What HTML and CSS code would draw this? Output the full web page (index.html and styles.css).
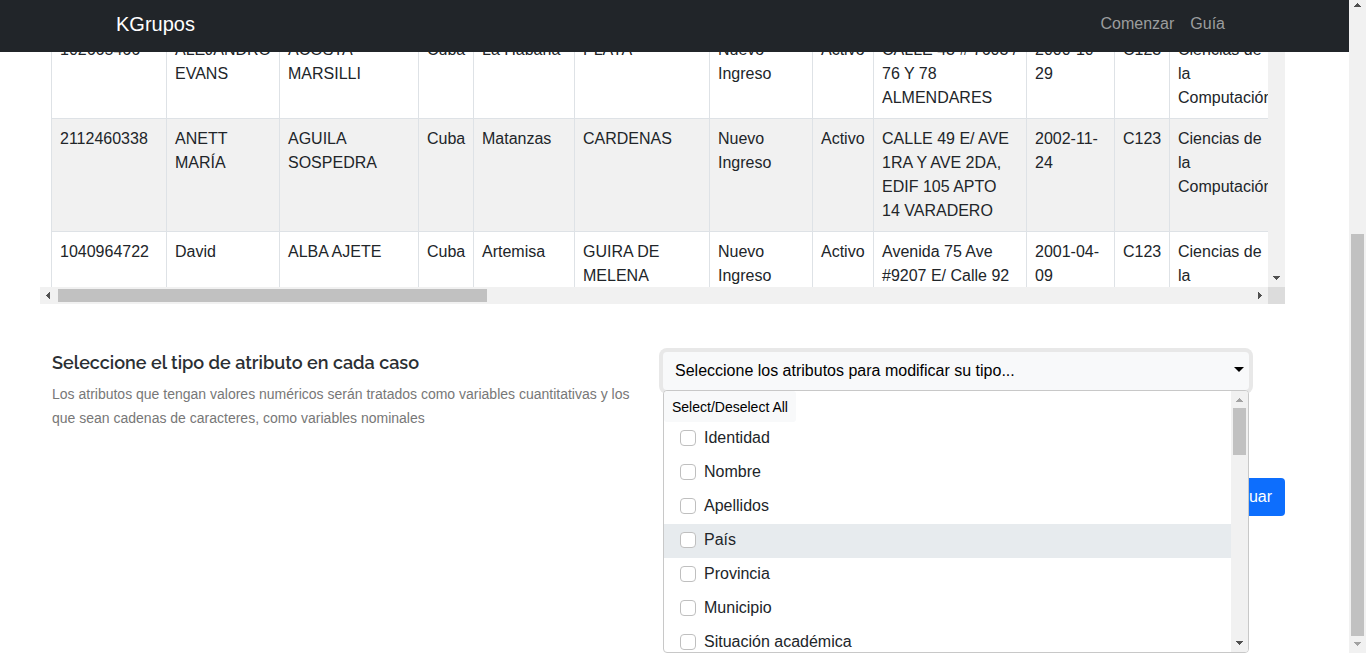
FILE: index.html
```html
<!DOCTYPE html>
<html lang="es">
<head>
<meta charset="utf-8">
<title>KGrupos</title>
<link rel="stylesheet" href="styles.css">
</head>
<body>
<div class="app">
  <div class="page">
    <header class="navbar">
      <a class="brand" href="#">KGrupos</a>
      <nav class="nav">
        <a class="nav-link" href="#">Comenzar</a>
        <a class="nav-link" href="#">Guía</a>
      </nav>
    </header>
    <main class="content">
      <div class="scroller">
        <div class="viewport">
          <table class="data">
            <colgroup>
              <col class="c-id"><col class="c-name"><col class="c-last"><col class="c-short"><col class="c-prov"><col class="c-mun"><col class="c-sit"><col class="c-state"><col class="c-addr"><col class="c-date"><col class="c-short"><col class="c-career">
            </colgroup>
            <tbody>
              <tr><td>102665466</td><td>ALEJANDRO EVANS</td><td>ACOSTA MARSILLI</td><td>Cuba</td><td>La Habana</td><td>PLAYA</td><td>Nuevo Ingreso</td><td>Activo</td><td>CALLE 43 # 7603 / 76 Y 78 ALMENDARES</td><td>2000-10-29</td><td>C123</td><td>Ciencias de la Computación</td></tr>
              <tr><td>2112460338</td><td>ANETT MARÍA</td><td>AGUILA SOSPEDRA</td><td>Cuba</td><td>Matanzas</td><td>CARDENAS</td><td>Nuevo Ingreso</td><td>Activo</td><td>CALLE 49 E/ AVE 1RA Y AVE 2DA, EDIF 105 APTO 14 VARADERO</td><td>2002-11-24</td><td>C123</td><td>Ciencias de la Computación</td></tr>
              <tr><td>1040964722</td><td>David</td><td>ALBA AJETE</td><td>Cuba</td><td>Artemisa</td><td>GUIRA DE MELENA</td><td>Nuevo Ingreso</td><td>Activo</td><td>Avenida 75 Ave #9207 E/ Calle 92</td><td>2001-04-09</td><td>C123</td><td>Ciencias de la Computación</td></tr>
            </tbody>
          </table>
        </div>
        <div class="bar bar-y bottom">
          <svg class="arrow" viewBox="0 0 17 17"><path d="M5 6h7v1h-1v1h-1v1h-1v1h-1v-1h-1v-1h-1v-1h-1z"/></svg>
        </div>
        <div class="bar bar-x">
          <svg class="arrow" viewBox="0 0 17 17"><path d="M10 5v7h-1v-1h-1v-1h-1v-1h-1v-1h1v-1h1v-1h1v-1z"/></svg>
          <div class="track-x"><div class="thumb thumb-table"></div></div>
          <svg class="arrow" viewBox="0 0 17 17"><path d="M7 5v7h1v-1h1v-1h1v-1h1v-1h-1v-1h-1v-1h-1v-1z"/></svg>
        </div>
        <div class="corner"></div>
      </div>

      <section class="types">
        <div class="intro">
          <h2 class="title">Seleccione el tipo de atributo en cada caso</h2>
          <p class="help">Los atributos que tengan valores numéricos serán tratados como variables cuantitativas y los que sean cadenas de caracteres, como variables nominales</p>
        </div>
        <div class="picker">
          <button class="toggle" type="button" aria-expanded="true"><span>Seleccione los atributos para modificar su tipo...</span><span class="caret"></span></button>
          <div class="menu">
            <div class="options">
              <button class="all" type="button">Select/Deselect All</button>
              <label class="option"><input class="check" type="checkbox">Identidad</label>
              <label class="option"><input class="check" type="checkbox">Nombre</label>
              <label class="option"><input class="check" type="checkbox">Apellidos</label>
              <label class="option active"><input class="check" type="checkbox">País</label>
              <label class="option"><input class="check" type="checkbox">Provincia</label>
              <label class="option"><input class="check" type="checkbox">Municipio</label>
              <label class="option"><input class="check" type="checkbox">Situación académica</label>
            </div>
            <div class="bar bar-y">
              <svg class="arrow off" viewBox="0 0 17 17"><path d="M5 11h7v-1h-1v-1h-1v-1h-1v-1h-1v1h-1v1h-1v1h-1z"/></svg>
              <div class="track-y"><div class="thumb thumb-menu"></div></div>
              <svg class="arrow" viewBox="0 0 17 17"><path d="M5 6h7v1h-1v1h-1v1h-1v1h-1v-1h-1v-1h-1v-1h-1z"/></svg>
            </div>
          </div>
        </div>
      </section>
      <div class="actions"><button class="primary" type="button">Continuar</button></div>
    </main>
  </div>
  <div class="bar bar-y">
    <svg class="arrow" viewBox="0 0 17 17"><path d="M5 7h7v-1h-1v-1h-1v-1h-1v-1h-1v1h-1v1h-1v1h-1z"/></svg>
    <div class="track-y end"><div class="thumb thumb-page"></div></div>
    <svg class="arrow off" viewBox="0 0 17 17"><path d="M5 6h7v1h-1v1h-1v1h-1v1h-1v-1h-1v-1h-1v-1h-1z"/></svg>
  </div>
</div>
</body>
</html>
```

FILE: styles.css
```css
* { box-sizing: border-box; }
body {
  margin: 0;
  font: 16px/24px "Liberation Sans", Arial, sans-serif;
  color: #212529;
  background: #fff;
}
button, input { font: inherit; margin: 0; }

.app { display: flex; height: 100vh; overflow: hidden; }
.page { flex: 1; min-width: 0; position: relative; }

.navbar {
  position: absolute;
  inset: 0 0 auto;
  z-index: 10;
  display: flex;
  align-items: center;
  justify-content: space-between;
  height: 52px;
  padding: 0 116px 4px;
  background: #212529;
}
.brand { color: #fff; font-size: 20px; text-decoration: none; }
.nav { display: flex; }
.nav-link { padding: 0 8px; color: #9b9d9e; text-decoration: none; }

.content { padding: 29px 64px 0 40px; }

/* Scrollable data table */
.scroller {
  display: grid;
  grid-template-columns: minmax(0, 1fr) 17px;
  grid-template-rows: 258px 17px;
}
.viewport { overflow: hidden; padding-left: 11px; }
.data { width: 1226px; table-layout: fixed; border-collapse: collapse; }
.data td { padding: 8px; border: 1px solid #dee2e6; vertical-align: top; }
.data tr:nth-child(even) { background: #f1f1f1; }
.c-id { width: 115px; }
.c-name { width: 113px; }
.c-last { width: 139px; }
.c-short { width: 55px; }
.c-prov { width: 101px; }
.c-mun { width: 135px; }
.c-sit { width: 103px; }
.c-state { width: 61px; }
.c-addr { width: 153px; }
.c-date { width: 88px; }

/* Scrollbars */
.bar { display: flex; background: #f1f1f1; }
.bar-y { flex: 0 0 17px; flex-direction: column; }
.bar-y.bottom { justify-content: flex-end; }
.bar-x { align-items: center; }
.arrow { flex: none; width: 17px; height: 17px; fill: #505050; shape-rendering: crispEdges; }
.arrow.off { fill: #a3a3a3; }
.track-x { flex: 1; padding: 0 1px; }
.track-y { flex: 1; display: flex; flex-direction: column; padding: 0 2px; }
.track-y.end { justify-content: flex-end; }
.thumb { background: #c1c1c1; }
.thumb-table { width: 36%; height: 13px; }
.thumb-menu { height: 47px; }
.thumb-page { height: 65%; }
.corner { background: #dcdcdc; }

/* Attribute types */
.types {
  display: grid;
  grid-template-columns: 587px minmax(0, 1fr);
  gap: 24px;
  align-items: start;
  padding: 48px 36px 0 12px;
}
.title {
  margin: 0 0 8px;
  font: 600 18px/22px Raleway, Lato, sans-serif;
  color: #2b2f33;
}
.help { margin: 0; font-size: 14px; color: #777; }
.picker { position: relative; }
.toggle {
  display: flex;
  align-items: center;
  justify-content: space-between;
  width: 100%;
  height: 38px;
  padding: 0 5px 0 12px;
  border: 0;
  border-radius: 4px;
  background: #f8f9fa;
  color: #000;
  box-shadow: 0 0 0 4px #e8e8e8;
}
.caret { border: 5px solid transparent; border-top-color: #000; border-bottom: 4px solid transparent; }
.menu {
  position: absolute;
  top: 100%;
  left: 0;
  right: 0;
  z-index: 5;
  display: flex;
  height: 263px;
  border: 1px solid #c8c8c8;
  border-radius: 4px;
  background: #fff;
  overflow: hidden;
}
.options { flex: 1; display: flex; flex-direction: column; }
.all {
  flex: none;
  align-self: flex-start;
  height: 31px;
  padding: 0 8px;
  border: 0;
  border-radius: 3px;
  background: #f8f9fa;
  color: #000;
  font-size: 14px;
}
.option { display: flex; align-items: center; flex: none; gap: 8px; height: 34px; padding: 0 16px 2px; }
.option.active { background: #e7ebee; }
.check {
  appearance: none;
  width: 16px;
  height: 16px;
  border: 1px solid #bfbfbf;
  border-radius: 4px;
  background: #fff;
}

.actions { display: flex; justify-content: flex-end; padding-top: 48px; }
.primary {
  height: 38px;
  padding: 0 13px;
  border: 0;
  border-radius: 4px;
  background: #0d6efd;
  color: #fff;
}
```
